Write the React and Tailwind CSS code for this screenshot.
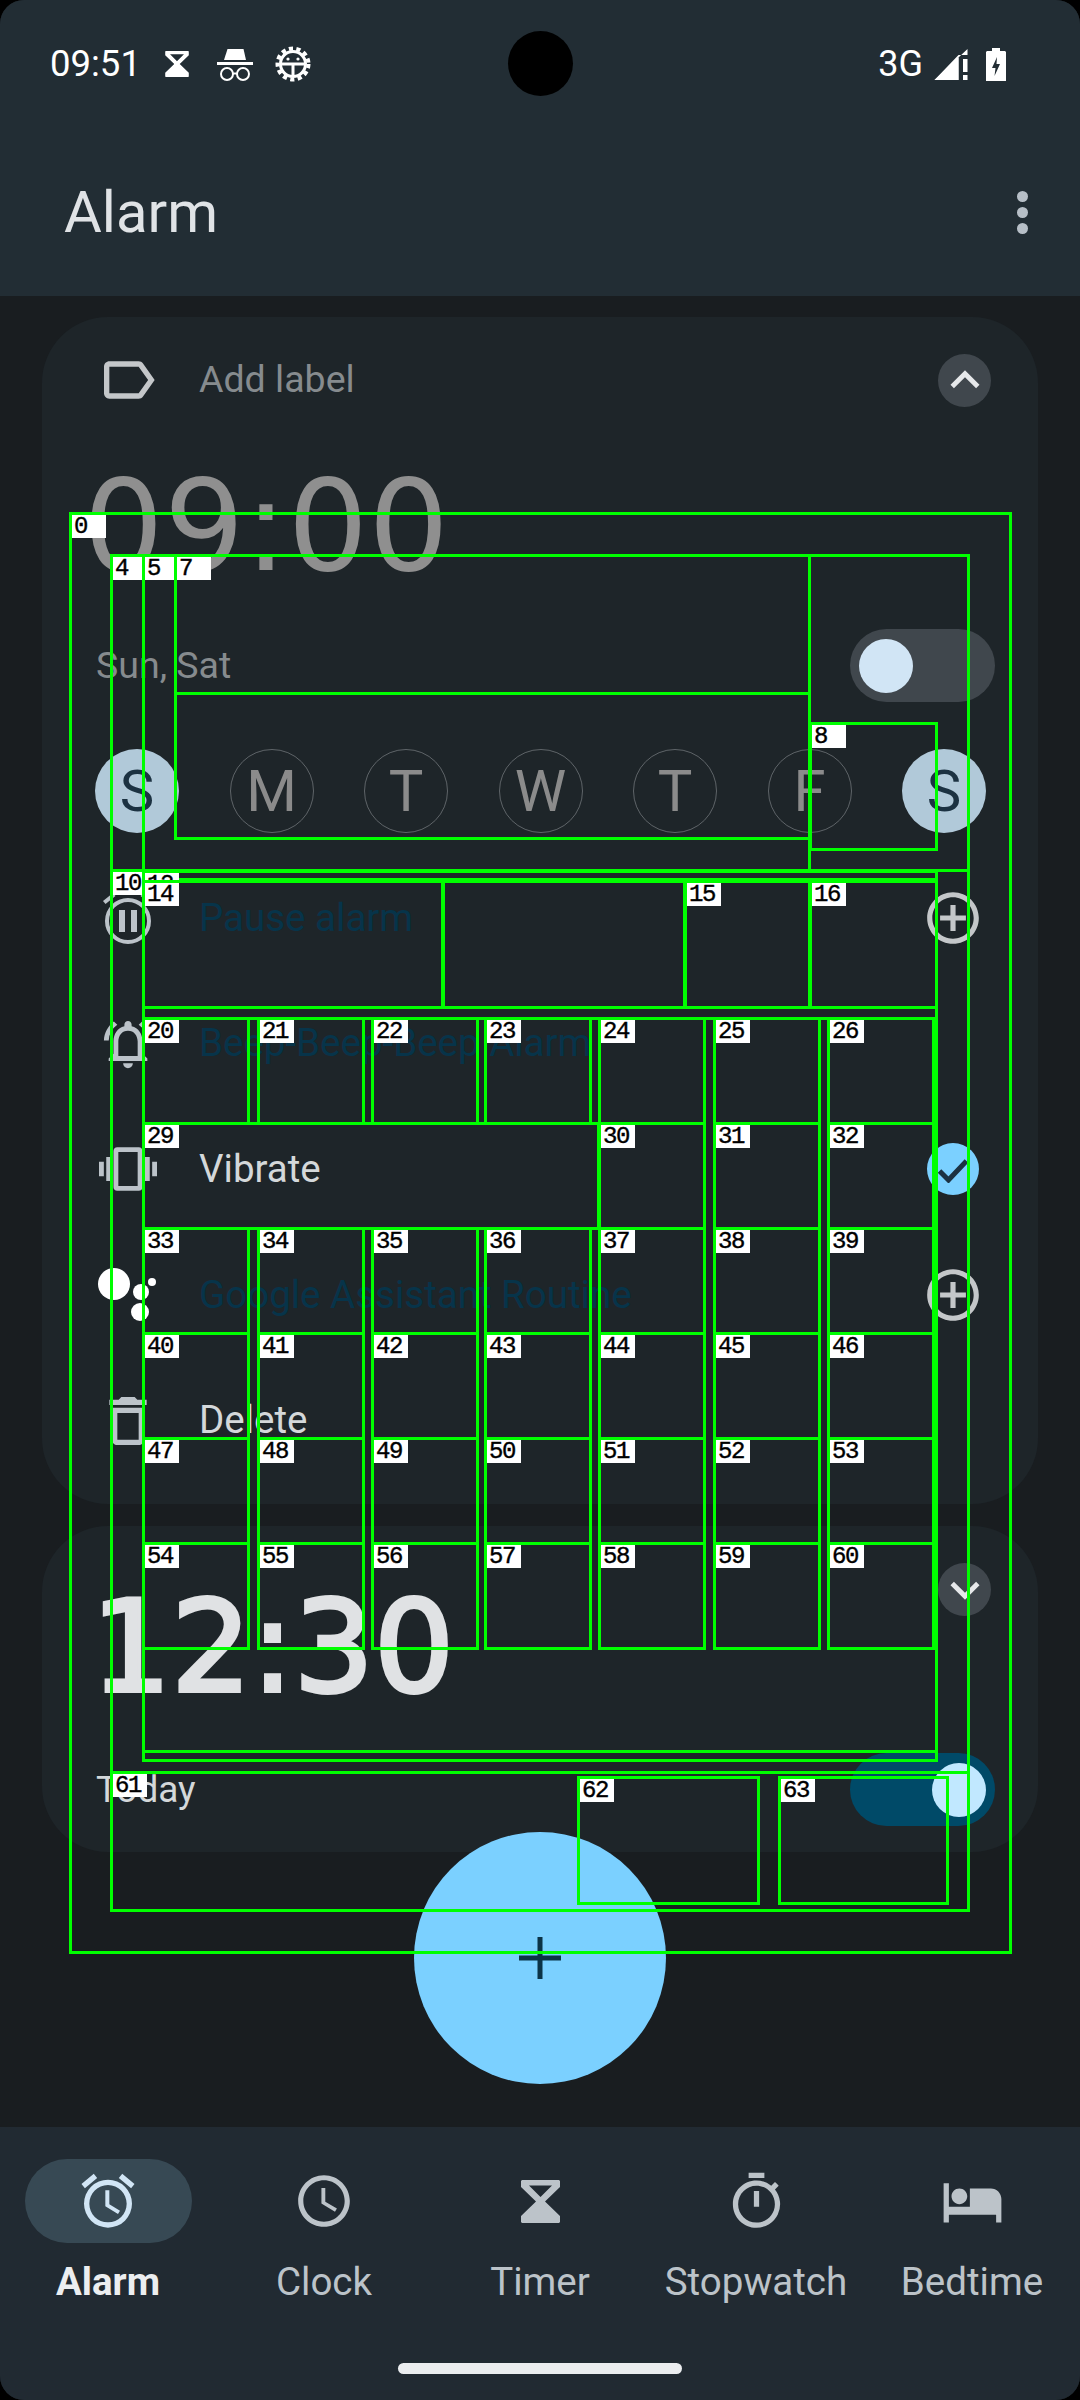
import React from 'react';
import {
  MdOutlineAlarm,
  MdOutlineAccessTime,
  MdOutlineLabel,
  MdKeyboardArrowUp,
  MdKeyboardArrowDown,
  MdOutlineNotificationsActive,
  MdOutlineVibration,
  MdOutlineDelete,
  MdAddCircleOutline,
  MdOutlineTimer,
  MdHotel,
} from 'react-icons/md';

const Hourglass = ({ className }) => (
  <svg viewBox="0 0 39 43" className={className} fill="currentColor">
    <path fillRule="evenodd" d="M1 0H38L39 1V7L24 21.5L39 36V42L38 43H1L0 42V36L15 21.5L0 7V1ZM8 5.5H31L19.5 17Z" />
  </svg>
);

const Incognito = () => (
  <svg viewBox="0 0 36 34" className="w-[36px] h-[34px] text-white" fill="currentColor">
    <path d="M7 13L10.5 2H26.5L29 13Z" />
    <rect x="0" y="15" width="36" height="3" />
    <circle cx="10" cy="27" r="6" fill="none" stroke="currentColor" strokeWidth="2" />
    <circle cx="26" cy="27" r="6" fill="none" stroke="currentColor" strokeWidth="2" />
    <rect x="15" y="25.5" width="6" height="2" />
  </svg>
);

const DebugGear = () => (
  <svg viewBox="0 0 36 36" className="w-[36px] h-[36px] text-white" fill="none" stroke="currentColor">
    <circle cx="18" cy="18" r="15.5" strokeWidth="4" strokeDasharray="4.2 3.4" />
    <circle cx="18" cy="18" r="12.5" strokeWidth="3" />
    <path d="M5 18H31M18 18V31" strokeWidth="3" />
    <circle cx="13" cy="13" r="1.6" fill="currentColor" stroke="none" />
    <circle cx="23" cy="13" r="1.6" fill="currentColor" stroke="none" />
  </svg>
);

const SignalAlert = () => (
  <svg viewBox="0 0 33 31" className="w-[34px] h-[31px] text-white" fill="currentColor">
    <path d="M0 31H24V8.5L33 0V6H24" />
    <path d="M0 31L24 8.5V31Z" />
    <rect x="28.5" y="10" width="4.5" height="13" />
    <rect x="28.5" y="26" width="4.5" height="5" />
  </svg>
);

const BatteryCharging = () => (
  <svg viewBox="0 0 20 33" className="w-[20px] h-[33px]">
    <path fill="#ffffff" d="M6 0H14V3H19L20 4V33H0V4L1 3H6Z" />
    <path fill="#222d34" d="M11 9L6 20H9.5L8.5 28L14 16H10.5Z" />
  </svg>
);

const PauseAlarm = () => (
  <svg viewBox="0 0 52 52" className="w-[52px] h-[52px] text-[#bcc3c9]" fill="currentColor">
    <circle cx="26" cy="29" r="21" fill="none" stroke="currentColor" strokeWidth="4" />
    <rect x="17" y="18" width="6" height="22" />
    <rect x="29" y="18" width="6" height="22" />
    <path d="M1 9L11 1L13.5 4L3.5 12Z" />
    <path d="M51 9L41 1L38.5 4L48.5 12Z" />
  </svg>
);

const AssistantDots = () => (
  <svg viewBox="0 0 60 54" className="w-[60px] h-[54px]" fill="#ffffff">
    <circle cx="16" cy="16" r="16" />
    <circle cx="43" cy="24" r="8" />
    <circle cx="42" cy="44" r="9" />
    <circle cx="54" cy="14" r="4" />
  </svg>
);

const Check = () => (
  <svg viewBox="0 0 30 24" className="w-[30px] h-[24px] mt-[4px]" fill="none" stroke="#1c3242" strokeWidth="5">
    <path d="M1.5 12L10.5 21L28.5 2" />
  </svg>
);

const FabPlus = () => (
  <svg viewBox="0 0 42 42" className="w-[42px] h-[42px]" fill="#0b3347">
    <rect x="18.5" y="0" width="5" height="42" />
    <rect x="0" y="18.5" width="42" height="5" />
  </svg>
);

const Switch = ({ on }) => (
  <div className={`w-[145px] h-[73px] rounded-full flex items-center ${on ? 'bg-[#004a68] justify-end pr-[9px]' : 'bg-[#40474d] pl-[9px]'}`}>
    <div className={`w-[54px] h-[54px] rounded-full ${on ? 'bg-[#c1e8ff]' : 'bg-[#d1e5f5]'}`} />
  </div>
);

const days = [
  { d: 'S', on: true },
  { d: 'M' },
  { d: 'T' },
  { d: 'W' },
  { d: 'T' },
  { d: 'F' },
  { d: 'S', on: true },
];

const OptionRow = ({ icon, text, muted, action }) => (
  <div className="h-[125.7px] flex items-center">
    <div className="w-[64px] flex justify-center shrink-0">{icon}</div>
    <div className={`ml-[39px] text-[38.5px] leading-none flex-1 ${muted ? 'text-[#07344a]' : 'text-[#d4d8da]'}`}>{text}</div>
    {action && <div className="w-[62px] flex justify-center mr-[11px]">{action}</div>}
  </div>
);

const navItems = [
  { name: 'Alarm', icon: <MdOutlineAlarm className="text-[64px] text-[#d1e5f5]" />, active: true },
  { name: 'Clock', icon: <MdOutlineAccessTime className="text-[62px]" /> },
  { name: 'Timer', icon: <Hourglass className="w-[39px] h-[43px]" /> },
  { name: 'Stopwatch', icon: <MdOutlineTimer className="text-[63px]" /> },
  { name: 'Bedtime', icon: <MdHotel className="text-[63px]" /> },
];

// overlay boxes: [label, x, y, w, h]
const colX = [143, 257.5, 371.5, 485, 599, 713.5, 827.5];
const rowY = { 20: 1018, 29: 1123, 33: 1228, 40: 1333, 47: 1438, 54: 1543 };
const gridBoxes = [];
Object.keys(rowY).forEach((start) => {
  const n = Number(start);
  if (n === 29) {
    gridBoxes.push(['29', 143, 1123, 456, 105]);
    [4, 5, 6].forEach((c, i) => gridBoxes.push([String(30 + i), colX[c], 1123, 105.5, 105]));
  } else {
    colX.forEach((x, i) => gridBoxes.push([String(n + i), x, rowY[n], 105.5, 105]));
  }
});
const boxes = [
  ['0', 70, 513, 941, 1439],
  ['', 111, 555, 858, 1355],
  ['4', 111, 555, 858, 315],
  ['5', 143, 555, 667, 315],
  ['7', 175, 555, 635, 138],
  ['', 175, 693, 635, 145],
  ['8', 810, 723, 127, 126],
  ['10', 111, 870, 858, 1040],
  ['', 143, 881, 794, 879],
  ['12', 143, 871, 794, 8],
  ['14', 143, 881, 300, 126],
  ['', 443, 881, 242, 126],
  ['15', 685, 881, 125, 126],
  ['16', 810, 881, 127, 126],
  ['', 143, 1018, 794, 733],
  ...gridBoxes,
  ['61', 111, 1772, 858, 138],
  ['62', 578, 1777, 181, 126],
  ['63', 779, 1777, 169, 126],
];

const Overlay = () => (
  <div className="absolute inset-0 pointer-events-none">
    {boxes.map(([label, x, y, w, h], i) => (
      <div
        key={i}
        className="absolute border-[3px] border-[#00ff00]"
        style={{ left: Math.round(x - 1), top: y - 1, width: Math.round(w + 2), height: h + 3 }}
      >
        {label && (
          <div className="w-[34px] h-[23px] bg-white text-black text-[24px] leading-[23px] pl-[2px] tracking-[-1.4px] [-webkit-text-stroke:0.4px_black] [font-family:'Liberation_Mono',monospace]">
            {label}
          </div>
        )}
      </div>
    ))}
  </div>
);

export default function App() {
  return (
    <div className="relative w-[1080px] h-[2400px] bg-black overflow-hidden [font-family:Roboto,sans-serif]">
      <div className="w-full h-full rounded-[24px] bg-[#191d20] flex flex-col overflow-hidden">
        <header className="h-[296px] bg-[#222d34] shrink-0">
          <div className="h-[128px] flex items-center pl-[50px] pr-[74px] text-white">
            <span className="text-[36.5px] leading-none">09:51</span>
            <Hourglass className="w-[26px] h-[26px] ml-[23px] text-white" />
            <div className="ml-[27px]"><Incognito /></div>
            <div className="ml-[22px]"><DebugGear /></div>
            <div className="flex-1" />
            <span className="text-[36px] leading-none">3G</span>
            <div className="ml-[11px]"><SignalAlert /></div>
            <div className="ml-[18px]"><BatteryCharging /></div>
          </div>
          <div className="h-[168px] flex items-center justify-between pl-[64px] pr-[52px]">
            <span className="text-[58px] leading-none text-[#e0e3e6]">Alarm</span>
            <div className="flex flex-col gap-[5px]">
              <div className="w-[11px] h-[11px] rounded-full bg-[#b7bfc7]" />
              <div className="w-[11px] h-[11px] rounded-full bg-[#b7bfc7]" />
              <div className="w-[11px] h-[11px] rounded-full bg-[#b7bfc7]" />
            </div>
          </div>
        </header>

        <main className="flex-1 px-[42px] pt-[21px]">
          <section className="h-[1187px] rounded-[66px] bg-[#1e2529] pl-[54px] pr-[43px] pt-[37px]">
            <div className="flex items-center h-[52px]">
              <div className="w-[64px] flex justify-center">
                <MdOutlineLabel className="text-[64px] text-[#c4c7c9]" />
              </div>
              <span className="ml-[39px] text-[37.5px] leading-none text-[#868b8e] flex-1">Add label</span>
              <div className="w-[53px] h-[53px] mr-[4px] rounded-full bg-[#40474d] flex items-center justify-center">
                <MdKeyboardArrowUp className="text-[58px] text-[#e6e8ea] shrink-0" />
              </div>
            </div>
            <div className="mt-[65px] h-[110px] flex items-center -ml-[13px] text-[127px] leading-none text-[#8f8f8f] [font-family:'DejaVu_Sans',sans-serif]">
              09:00
            </div>
            <div className="mt-[48px] flex items-center justify-between h-[73px]">
              <span className="text-[37.5px] leading-none text-[#868b8e]">Sun, Sat</span>
              <Switch />
            </div>
            <div className="mt-[47px] flex gap-[50.5px] -ml-[1px]">
              {days.map((item, i) => (
                <div
                  key={i}
                  className={`w-[84px] h-[84px] rounded-full flex items-center justify-center text-[58px] leading-none ${
                    item.on ? 'bg-[#b1c9d9] text-[#1c3242]' : 'border border-[#5e6468] text-[#8b8b8b]'
                  }`}
                >
                  {item.d}
                </div>
              ))}
            </div>
            <div className="mt-[22px]">
              <OptionRow
                icon={<PauseAlarm />}
                text="Pause alarm"
                muted
                action={<MdAddCircleOutline className="text-[62px] text-[#c4c7c9]" />}
              />
              <OptionRow icon={<MdOutlineNotificationsActive className="text-[58px] text-[#bcc3c9]" />} text="Beep-Beep-Beep Alarm" muted />
              <OptionRow
                icon={<MdOutlineVibration className="text-[58px] text-[#bcc3c9]" />}
                text="Vibrate"
                action={
                  <div className="w-[52px] h-[52px] rounded-full bg-[#7bd0ff] flex items-center justify-center">
                    <Check />
                  </div>
                }
              />
              <OptionRow
                icon={<AssistantDots />}
                text="Google Assistant Routine"
                muted
                action={<MdAddCircleOutline className="text-[62px] text-[#c4c7c9]" />}
              />
              <OptionRow icon={<MdOutlineDelete className="text-[64px] text-[#bcc3c9]" />} text="Delete" />
            </div>
          </section>

          <section className="mt-[22px] h-[326px] rounded-[66px] bg-[#1e2529] pl-[54px] pr-[43px] pt-[37px]">
            <div className="flex items-start justify-between">
              <div className="mt-[30px] -ml-[5px] h-[110px] flex items-center text-[126px] leading-none text-[#e0e2e4] [font-family:'DejaVu_Sans',sans-serif] [-webkit-text-stroke:4px_#e0e2e4]">
                12:30
              </div>
              <div className="w-[53px] h-[53px] mr-[4px] rounded-full bg-[#40474d] flex items-center justify-center">
                <MdKeyboardArrowDown className="text-[58px] text-[#e6e8ea] shrink-0" />
              </div>
            </div>
            <div className="mt-[50px] flex items-center justify-between h-[73px]">
              <span className="text-[37px] leading-none text-[#d4d8da]">Today</span>
              <Switch on />
            </div>
          </section>
        </main>

        <nav className="h-[273px] bg-[#212a32] shrink-0 pt-[32px]">
          <div className="grid grid-cols-5 text-[#bcc3c9]">
            {navItems.map((item) => (
              <div key={item.name} className="flex flex-col items-center">
                <div className={`w-[167px] h-[84px] rounded-full flex items-center justify-center ${item.active ? 'bg-[#374954]' : ''}`}>
                  {item.icon}
                </div>
                <span className={`mt-[19px] h-[40px] leading-[40px] text-[38.5px] whitespace-nowrap ${item.active ? 'font-bold text-[#eceef0]' : ''}`}>
                  {item.name}
                </span>
              </div>
            ))}
          </div>
          <div className="mt-[61px] mx-auto w-[284px] h-[11px] rounded-full bg-[#ebedef]" />
        </nav>
      </div>

      <div className="absolute left-[507.5px] top-[31px] w-[65px] h-[65px] rounded-full bg-black" />
      <div className="absolute left-[414px] top-[1832px] w-[252px] h-[252px] rounded-full bg-[#7bd0ff] flex items-center justify-center">
        <FabPlus />
      </div>
      <Overlay />
    </div>
  );
}
